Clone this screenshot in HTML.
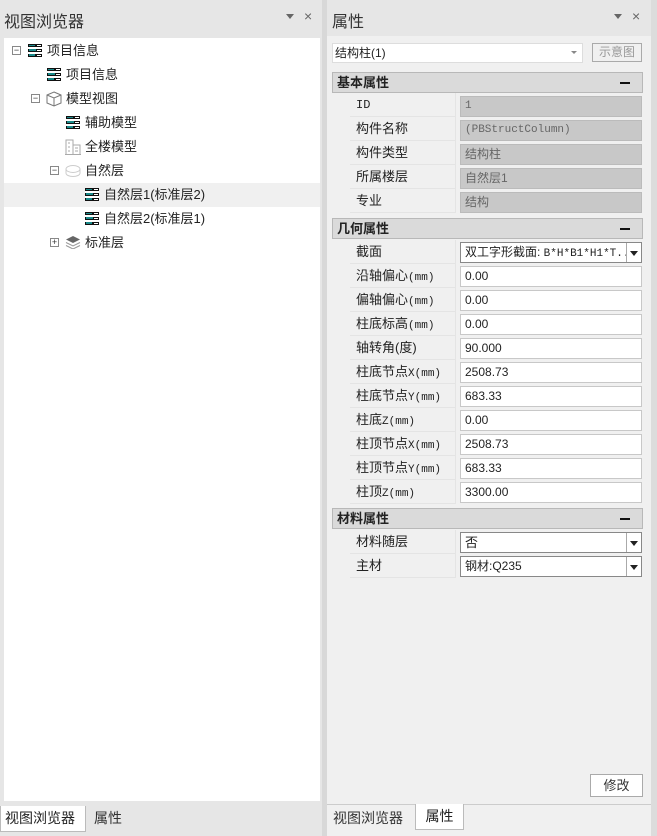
<!DOCTYPE html>
<html><head><meta charset="utf-8"><style>
*{margin:0;padding:0;box-sizing:border-box}
body{width:657px;height:836px;background:#e6e6e6;font-family:"Liberation Sans","Noto Sans CJK SC",sans-serif;font-size:13px;color:#222;position:relative;overflow:hidden}
.a{position:absolute;white-space:nowrap}
.title{font-size:16px;color:#333}
.tree{left:4px;top:38px;width:316px;height:763px;background:#fff}
.tr{position:absolute;height:24px;line-height:24px;font-size:13px;color:#222;white-space:nowrap}
.pm{position:absolute;width:9px;height:9px;border:1px solid #888;background:#fff;font-size:9px;line-height:7px;text-align:center;color:#333}
.ic{position:absolute;width:14px;height:13px}
.rp{left:327px;top:0;width:324px;height:836px;background:#f0f0f0}
.hd{position:absolute;left:332px;width:311px;height:21px;background:#dadada;border:1px solid #b8b8b8;font-weight:bold;font-size:13px;line-height:19px;padding-left:4px}
.hd b{position:absolute;right:12px;top:9px;width:10px;height:2px;background:#111}
.lb{position:absolute;left:350px;width:106px;height:24px;line-height:24px;padding-left:6px;border-bottom:1px solid #e4e4e4;border-right:1px solid #e4e4e4;background:#f0f0f0;white-space:nowrap}
.vb{position:absolute;left:460px;width:182px;height:21px;line-height:19px;border:1px solid #c8c8c8;padding-left:4px;font-size:12px;background:#fff;white-space:nowrap}
.vb.g{background:#c8c8c8;border-color:#bbb;color:#666}
.dd{position:absolute;right:0;top:0;width:15px;height:19px;border-left:1px solid #aaa;background:#fff}
.dd:after{content:"";position:absolute;left:3px;top:8px;border:4px solid transparent;border-top:5px solid #222;border-bottom:0}
.mono{font-family:"Liberation Mono",monospace;font-size:11px}
</style></head><body>
<div class="a title" style="left:4px;top:8px">视图浏览器</div>
<div class="a" style="left:286px;top:14px;border:4px solid transparent;border-top:5px solid #666"></div>
<div class="a" style="left:304px;top:8px;color:#666;font-size:14px">×</div>
<div class="a tree"></div>
<div class="a" style="left:4px;top:183px;width:316px;height:24px;background:#f0f0f0"></div>
<svg width="0" height="0" style="position:absolute"><defs><g id="li"><rect x="0" y="0" width="14" height="13" fill="#111"/><rect x="0" y="3" width="14" height="2" fill="#fff"/><rect x="0" y="8" width="14" height="2" fill="#fff"/><rect x="1" y="1" width="6" height="1" fill="#1a8a8a"/><rect x="1" y="5" width="7" height="2" fill="#1a8a8a"/><rect x="1" y="10" width="6" height="2" fill="#1a8a8a"/><rect x="9" y="1" width="4" height="1" fill="#fff"/><rect x="9" y="6" width="4" height="1" fill="#fff"/><rect x="9" y="11" width="4" height="1" fill="#fff"/></g></defs></svg>
<div class="pm" style="left:12px;top:46px">−</div>
<svg class="ic" style="left:28px;top:44px"><use href="#li"/></svg>
<div class="tr" style="left:47px;top:39px">项目信息</div>
<svg class="ic" style="left:47px;top:68px"><use href="#li"/></svg>
<div class="tr" style="left:66px;top:63px">项目信息</div>
<div class="pm" style="left:31px;top:94px">−</div>
<svg class="ic" style="left:46px;top:91px;width:16px;height:16px"><path d="M8 1L15 4V12L8 15L1 12V4Z M1 4L8 7L15 4 M8 7V15" fill="none" stroke="#777"/></svg>
<div class="tr" style="left:66px;top:87px">模型视图</div>
<svg class="ic" style="left:66px;top:116px"><use href="#li"/></svg>
<div class="tr" style="left:85px;top:111px">辅助模型</div>
<svg class="ic" style="left:65px;top:139px;width:16px;height:16px"><path d="M1 15V1H8V15M8 6H15V15M3 4h2M3 8h2M3 12h2M10 9h3M10 12h3M0 15.5H16" fill="none" stroke="#aaa"/></svg>
<div class="tr" style="left:85px;top:135px">全楼模型</div>
<div class="pm" style="left:50px;top:166px">−</div>
<svg class="ic" style="left:65px;top:164px;width:16px;height:14px"><ellipse cx="8" cy="5" rx="7" ry="3.5" fill="none" stroke="#ccc"/><path d="M1 5v4c0 2 3 3.5 7 3.5s7-1.5 7-3.5V5" fill="none" stroke="#ccc"/></svg>
<div class="tr" style="left:85px;top:159px">自然层</div>
<svg class="ic" style="left:85px;top:188px"><use href="#li"/></svg>
<div class="tr" style="left:104px;top:183px">自然层1(标准层2)</div>
<svg class="ic" style="left:85px;top:212px"><use href="#li"/></svg>
<div class="tr" style="left:104px;top:207px">自然层2(标准层1)</div>
<div class="pm" style="left:50px;top:238px">+</div>
<svg class="ic" style="left:65px;top:235px;width:16px;height:14px"><path d="M8 1L15 4.5L8 8L1 4.5Z" fill="#666"/><path d="M1 7.5L8 11L15 7.5M1 10.5L8 14L15 10.5" fill="none" stroke="#999"/></svg>
<div class="tr" style="left:85px;top:231px">标准层</div>
<div class="a" style="left:0;top:806px;width:86px;height:26px;background:#fff;border:1px solid #bbb;border-top:none;line-height:24px;padding-left:4px;font-size:14px">视图浏览器</div>
<div class="a" style="left:94px;top:806px;line-height:24px;font-size:14px;color:#333">属性</div>
<div class="a" style="left:322px;top:0;width:5px;height:836px;background:#d8d8d8"></div>

<div class="a rp"></div>
<div class="a" style="left:327px;top:0;width:324px;height:36px;background:#e6e6e6"></div>
<div class="a title" style="left:332px;top:8px">属性</div>
<div class="a" style="left:614px;top:14px;border:4px solid transparent;border-top:5px solid #666"></div>
<div class="a" style="left:632px;top:8px;color:#666;font-size:14px">×</div>
<div class="a" style="left:651px;top:0;width:6px;height:836px;background:#dcdcdc"></div>
<div class="a" style="left:332px;top:43px;width:251px;height:20px;background:#fff;border:1px solid #ddd;line-height:18px;padding-left:2px;font-size:12px">结构柱(1)</div>
<div class="a" style="left:571px;top:51px;border:3px solid transparent;border-top:3px solid #888"></div>
<div class="a" style="left:592px;top:43px;width:50px;height:19px;border:1px solid #aaa;background:#f0f0f0;color:#999;font-size:12px;line-height:17px;text-align:center">示意图</div>

<div class="hd" style="top:72px">基本属性<b></b></div>
<div class="lb mono" style="top:93px;font-size:12px">ID</div><div class="vb g mono" style="top:96px">1</div>
<div class="lb" style="top:117px">构件名称</div><div class="vb g mono" style="top:120px">(PBStructColumn)</div>
<div class="lb" style="top:141px">构件类型</div><div class="vb g" style="top:144px">结构柱</div>
<div class="lb" style="top:165px">所属楼层</div><div class="vb g" style="top:168px">自然层1</div>
<div class="lb" style="top:189px">专业</div><div class="vb g" style="top:192px">结构</div>

<div class="hd" style="top:218px">几何属性<b></b></div>
<div class="lb" style="top:240px">截面</div><div class="vb" style="top:242px;border-color:#888;overflow:hidden">双工字形截面: <span class="mono">B*H*B1*H1*T..</span><span class="dd"></span></div>
<div class="lb" style="top:264px">沿轴偏心<span class="mono">(mm)</span></div><div class="vb" style="top:266px">0.00</div>
<div class="lb" style="top:288px">偏轴偏心<span class="mono">(mm)</span></div><div class="vb" style="top:290px">0.00</div>
<div class="lb" style="top:312px">柱底标高<span class="mono">(mm)</span></div><div class="vb" style="top:314px">0.00</div>
<div class="lb" style="top:336px">轴转角(度)</div><div class="vb" style="top:338px">90.000</div>
<div class="lb" style="top:360px">柱底节点<span class="mono">X(mm)</span></div><div class="vb" style="top:362px">2508.73</div>
<div class="lb" style="top:384px">柱底节点<span class="mono">Y(mm)</span></div><div class="vb" style="top:386px">683.33</div>
<div class="lb" style="top:408px">柱底<span class="mono">Z(mm)</span></div><div class="vb" style="top:410px">0.00</div>
<div class="lb" style="top:432px">柱顶节点<span class="mono">X(mm)</span></div><div class="vb" style="top:434px">2508.73</div>
<div class="lb" style="top:456px">柱顶节点<span class="mono">Y(mm)</span></div><div class="vb" style="top:458px">683.33</div>
<div class="lb" style="top:480px">柱顶<span class="mono">Z(mm)</span></div><div class="vb" style="top:482px">3300.00</div>

<div class="hd" style="top:508px">材料属性<b></b></div>
<div class="lb" style="top:530px">材料随层</div><div class="vb" style="top:532px;border-color:#888;font-size:13px">否<span class="dd"></span></div>
<div class="lb" style="top:554px">主材</div><div class="vb" style="top:556px;border-color:#888">钢材:Q235<span class="dd"></span></div>

<div class="a" style="left:590px;top:774px;width:53px;height:23px;background:#fff;border:1px solid #aaa;text-align:center;line-height:21px;color:#333">修改</div>
<div class="a" style="left:327px;top:804px;width:324px;height:1px;background:#ccc"></div>
<div class="a" style="left:333px;top:806px;line-height:24px;font-size:14px;color:#333">视图浏览器</div>
<div class="a" style="left:415px;top:804px;width:49px;height:26px;background:#fff;border:1px solid #bbb;border-top:none;line-height:24px;text-align:center;font-size:14px">属性</div>
</body></html>
